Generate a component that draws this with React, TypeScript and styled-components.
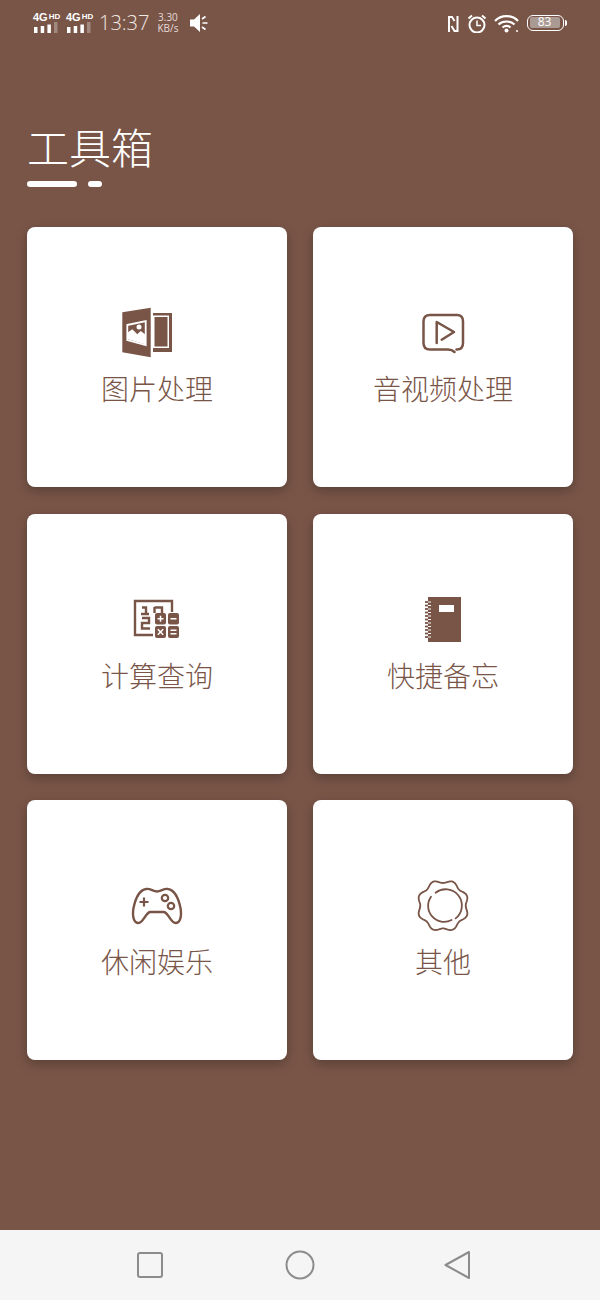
import React from "react";
import styled, { createGlobalStyle } from "styled-components";

const tools = [
  { name: "图片处理", icon: <ImageIcon /> },
  { name: "音视频处理", icon: <VideoIcon /> },
  { name: "计算查询", icon: <CalcIcon /> },
  { name: "快捷备忘", icon: <NoteIcon /> },
  { name: "休闲娱乐", icon: <GameIcon /> },
  { name: "其他", icon: <OtherIcon /> },
];

export default function App() {
  return (
    <Page>
      <GlobalStyle />
      <Main>
        <StatusBar>
          <StatusLeft>
            <Signal />
            <Signal />
            <Clock>13:37</Clock>
            <Speed>
              <span>3.30</span>
              <span>KB/s</span>
            </Speed>
            <SpeakerIcon />
          </StatusLeft>
          <StatusRight>
            <NfcIcon />
            <AlarmIcon />
            <WifiIcon />
            <Battery>
              <BatteryBody>
                <BatteryLevel>83</BatteryLevel>
              </BatteryBody>
              <BatteryCap />
            </Battery>
          </StatusRight>
        </StatusBar>
        <Header>
          <Title>工具箱</Title>
          <Underline>
            <Dash $width={50} />
            <Dash $width={14} />
          </Underline>
        </Header>
        <Grid>
          {tools.map((tool) => (
            <Card key={tool.name}>
              <IconSlot>{tool.icon}</IconSlot>
              <CardLabel>{tool.name}</CardLabel>
            </Card>
          ))}
        </Grid>
      </Main>
      <NavBar>
        <svg width="28" height="28" viewBox="0 0 28 28">
          <rect x="2" y="2" width="24" height="24" rx="2" fill="none" stroke="#8c8c8c" strokeWidth="2" />
        </svg>
        <svg width="30" height="30" viewBox="0 0 30 30">
          <circle cx="15" cy="15" r="13.5" fill="none" stroke="#8c8c8c" strokeWidth="2" />
        </svg>
        <BackIcon width="28" height="30" viewBox="0 0 28 30">
          <path d="M26 2 L2.500 15 L26 28 Z" fill="none" stroke="#8c8c8c" strokeWidth="2" strokeLinejoin="round" />
        </BackIcon>
      </NavBar>
    </Page>
  );
}

function Signal() {
  return (
    <SignalWrap>
      <SignalText>
        4G<small>HD</small>
      </SignalText>
      <svg width="26" height="11" viewBox="0 0 26 11">
        <rect x="1" y="5" width="3.500" height="6" fill="#fff" />
        <rect x="7.700" y="4" width="3.500" height="7" fill="#fff" />
        <rect x="14.400" y="2.500" width="3.500" height="8.500" fill="#fff" />
        <rect x="21" y="0" width="3.500" height="11" fill="#fff" opacity="0.3" />
      </svg>
    </SignalWrap>
  );
}

function SpeakerIcon() {
  return (
    <SpeakerSvg width="20" height="20" viewBox="0 0 20 20">
      <path d="M1 6.500 H5 L11 1 V19 L5 13.500 H1 Z" fill="#fff" />
      <path d="M13.500 10 H18.500 M13 6 L16.500 3.500 M13 14 L16.500 16.500" stroke="#fff" strokeWidth="1.700" fill="none" />
    </SpeakerSvg>
  );
}

function NfcIcon() {
  return (
    <svg width="14" height="20" viewBox="0 0 14 20">
      <path d="M3 19 V4 H6 L8.500 8" fill="none" stroke="#fff" strokeWidth="2" />
      <path d="M11.500 3 V18 H8.500 L5.500 13" fill="none" stroke="#fff" strokeWidth="2" />
    </svg>
  );
}

function AlarmIcon() {
  return (
    <svg width="20" height="20" viewBox="0 0 20 20">
      <circle cx="10" cy="12" r="7.500" fill="none" stroke="#fff" strokeWidth="2" />
      <path d="M10 7.500 V12.500 H14" fill="none" stroke="#fff" strokeWidth="1.500" />
      <path d="M1.500 5.500 L5 2.500 M18.500 5.500 L15 2.500" stroke="#fff" strokeWidth="2" />
    </svg>
  );
}

function WifiIcon() {
  return (
    <svg width="26" height="20" viewBox="0 0 26 20">
      <path d="M1 8 C7 1.500 18 1.500 24 8" fill="none" stroke="#fff" strokeWidth="2.200" />
      <path d="M4.500 11.500 C8.500 7.500 16.500 7.500 20.500 11.500" fill="none" stroke="#fff" strokeWidth="2.200" />
      <path d="M8.500 14.500 C11 12.500 14 12.500 16.500 14.500" fill="none" stroke="#fff" strokeWidth="2.200" />
      <circle cx="12.500" cy="17.500" r="2" fill="#fff" />
      <circle cx="23" cy="18" r="1" fill="#fff" />
    </svg>
  );
}

// the door sits left of the card's centre, so the svg keeps blank room on the right
function ImageIcon() {
  return (
    <svg width="72" height="52" viewBox="0 0 72 52">
      <path d="M1.300 5.300 L29.700 0.700 V50.300 L1.300 45.300 Z" fill="#795548" />
      <rect x="32" y="6" width="19" height="39" fill="#795548" />
      <rect x="32" y="8.500" width="16" height="32.500" fill="#fff" />
      <rect x="33.500" y="10" width="13" height="29.500" fill="#795548" />
      <path d="M6.300 18 L24.700 14 V38 L6.300 33 Z" fill="none" stroke="#fff" strokeWidth="1.800" />
      <path d="M7 25.300 L11.300 22.300 L16.300 27.300 L19.700 24 L24 27.300 V37.300 L7 32.300 Z" fill="#fff" />
      <circle cx="18" cy="20" r="2.500" fill="#fff" />
    </svg>
  );
}

function VideoIcon() {
  return (
    <svg width="46" height="44" viewBox="0 0 46 44">
      <path
        d="M36.500 38.500 H37 Q43 38.500 43 32 V10.500 Q43 4 37 4 H10 Q3.500 4 3.500 10.500 V32 Q3.500 38.500 10 38.500 H28 Q32 38.500 34.500 41"
        fill="none"
        stroke="#795548"
        strokeWidth="2.500"
        strokeLinecap="round"
        strokeLinejoin="round"
      />
      <path
        d="M16.700 32 V11 L34 21 L21.700 28.700"
        fill="none"
        stroke="#795548"
        strokeWidth="2.500"
        strokeLinecap="round"
        strokeLinejoin="round"
      />
    </svg>
  );
}

function CalcIcon() {
  return (
    <svg width="48" height="42" viewBox="0 0 48 42">
      <path d="M20 36 H2 V2 H39 V13" fill="none" stroke="#795548" strokeWidth="2.400" />
      <path d="M9 8.500 H13 V15 M8 15 H16" fill="none" stroke="#795548" strokeWidth="2.400" />
      <path d="M9 19 H16 V24 H9 V29.500 H17" fill="none" stroke="#795548" strokeWidth="2.400" />
      <path d="M21.500 8.500 H29 V14" fill="none" stroke="#795548" strokeWidth="2.400" />
      <path d="M21.500 8 V14" fill="none" stroke="#795548" strokeWidth="2.400" />
      <rect x="22" y="14" width="11" height="11.500" rx="2" fill="#795548" />
      <rect x="35" y="14" width="11" height="11.500" rx="2" fill="#795548" />
      <rect x="22" y="27" width="11" height="12" rx="2" fill="#795548" />
      <rect x="35" y="27" width="11" height="12" rx="2" fill="#795548" />
      <path
        d="M24.500 19.700 H30.500 M27.500 16.700 V22.700 M37.500 19.700 H43.500 M24.800 30.300 L30.200 35.700 M30.200 30.300 L24.800 35.700 M37.500 31.300 H43.500 M37.500 34.700 H43.500"
        stroke="#fff"
        strokeWidth="1.500"
      />
    </svg>
  );
}

function NoteIcon() {
  return (
    <svg width="38" height="46" viewBox="0 0 38 46">
      <rect x="4" y="0" width="33" height="45" fill="#795548" />
      <rect x="15" y="8" width="15" height="7" fill="#fff" />
      {[5, 8.500, 12, 15.500, 19, 22.500, 26, 29.500, 33, 36.500, 40].map((y) => (
        <g key={y}>
          <path d={`M1 ${y} H4`} stroke="#795548" strokeWidth="1.800" />
          <path d={`M4 ${y} H7`} stroke="#fff" strokeWidth="1" />
        </g>
      ))}
    </svg>
  );
}

function GameIcon() {
  return (
    <svg width="52" height="38" viewBox="0 0 52 38">
      <path
        d="M15 2 C19 1 22 4.500 26 4.500 C30 4.500 33 1 37 2 C43 3 47 9 49.500 21 C51 30 49 36 44.500 36 C40 36 37.500 26 33 25 H19 C14.500 26 12 36 7.500 36 C3 36 1 30 2.500 21 C5 9 9 3 15 2 Z"
        fill="none"
        stroke="#795548"
        strokeWidth="2.400"
      />
      <path d="M8.500 15 H17.500 M13 10.500 V19.500" stroke="#795548" strokeWidth="2.200" />
      <circle cx="34" cy="11" r="3.200" fill="none" stroke="#795548" strokeWidth="2.200" />
      <circle cx="40" cy="19" r="3.200" fill="none" stroke="#795548" strokeWidth="2.200" />
    </svg>
  );
}

// eight soft lobes round the centre, with a dip at the top and at each side
function wavyRing(cx: number, cy: number, radius: number, depth: number) {
  const points: string[] = [];
  for (let i = 0; i < 180; i++) {
    const angle = (i / 180) * Math.PI * 2;
    const r = radius - depth * Math.cos(8 * angle);
    points.push(`${(cx + r * Math.sin(angle)).toFixed(2)} ${(cy - r * Math.cos(angle)).toFixed(2)}`);
  }
  return `M${points.join(" L")} Z`;
}

function OtherIcon() {
  return (
    <svg width="54" height="54" viewBox="0 0 54 54">
      <path d={wavyRing(27, 26.7, 24.3, 1.6)} fill="none" stroke="#795548" strokeWidth="1.800" />
      <path
        d="M19.600 13.700 A16 16 0 0 1 39.600 39.400 M35.600 41 A16 16 0 0 1 15 17.700"
        fill="none"
        stroke="#795548"
        strokeWidth="1.800"
        strokeLinecap="round"
      />
    </svg>
  );
}

const GlobalStyle = createGlobalStyle`
  html, body {
    margin: 0;
    padding: 0;
    background: #795548;
  }
`;

const Page = styled.div`
  width: 600px;
  height: 1300px;
  display: flex;
  flex-direction: column;
  overflow: hidden;
  font-family: "Noto Sans CJK SC", "Noto Sans", sans-serif;
`;

const Main = styled.div`
  flex: 1;
  background: #795548;
`;

const StatusBar = styled.div`
  height: 46px;
  box-sizing: border-box;
  padding: 0 33px 1px;
  display: flex;
  justify-content: space-between;
  align-items: center;
  color: #fff;
`;

const StatusLeft = styled.div`
  display: flex;
  align-items: center;
`;

const StatusRight = styled.div`
  display: flex;
  align-items: center;
  gap: 7px;
`;

const SignalWrap = styled.div`
  width: 33px;
  display: flex;
  flex-direction: column;
`;

const SignalText = styled.div`
  font-family: "Liberation Sans", sans-serif;
  font-size: 11px;
  font-weight: 700;
  line-height: 10px;
  white-space: nowrap;
  color: #fff;

  small {
    font-size: 8px;
    vertical-align: 2px;
    margin-left: 1px;
  }
`;

const Clock = styled.div`
  font-family: "Open Sans", sans-serif;
  font-size: 20px;
  font-weight: 300;
  line-height: 24px;
  color: #f1e9e5;
`;

const Speed = styled.div`
  margin-left: 8px;
  display: flex;
  flex-direction: column;
  align-items: center;
  font-family: "Open Sans", sans-serif;
  font-size: 10px;
  font-weight: 400;
  line-height: 11px;
  color: #e6dcd8;
`;

const SpeakerSvg = styled.svg`
  margin-left: 11px;
`;

const Battery = styled.div`
  display: flex;
  align-items: center;
`;

const BatteryBody = styled.div`
  width: 37px;
  height: 16px;
  box-sizing: border-box;
  border: 1.500px solid #fff;
  border-radius: 6px;
  padding: 1.500px;
  display: flex;
`;

const BatteryLevel = styled.div`
  width: 94%;
  background: #aa9a94;
  border-radius: 2px;
  text-align: center;
  font-family: "Open Sans", sans-serif;
  font-size: 12px;
  line-height: 10px;
  color: #fff;
`;

const BatteryCap = styled.div`
  width: 2px;
  height: 6px;
  margin-left: 1px;
  background: #fff;
  border-radius: 0 2px 2px 0;
`;

const Header = styled.div`
  padding: 73px 27px 0;
`;

const Title = styled.div`
  font-size: 42px;
  font-weight: 300;
  line-height: 54px;
  color: #fff;
`;

const Underline = styled.div`
  margin-top: 8px;
  display: flex;
  gap: 11px;
`;

const Dash = styled.div<{ $width: number }>`
  width: ${(p) => p.$width}px;
  height: 6px;
  border-radius: 3px;
  background: #fff;
`;

const Grid = styled.div`
  margin-top: 40px;
  padding: 0 27px;
  display: grid;
  grid-template-columns: 260px 260px;
  grid-auto-rows: 260px;
  gap: 26.5px 26px;
`;

const Card = styled.div`
  background: #fff;
  border-radius: 8px;
  box-shadow: 0 4px 12px rgba(0, 0, 0, 0.25);
  display: flex;
  flex-direction: column;
  align-items: center;
  padding-top: 80px;
  box-sizing: border-box;
`;

const IconSlot = styled.div`
  height: 52px;
  display: flex;
  align-items: center;
  justify-content: center;
`;

const CardLabel = styled.div`
  margin-top: 8px;
  font-size: 28px;
  font-weight: 300;
  line-height: 42px;
  color: #795548;
`;

const NavBar = styled.div`
  height: 70px;
  flex-shrink: 0;
  background: #f5f5f5;
  display: flex;
  align-items: center;
  gap: 121px;
  padding-left: 136px;
`;

const BackIcon = styled.svg`
  margin-left: 7px;
`;
